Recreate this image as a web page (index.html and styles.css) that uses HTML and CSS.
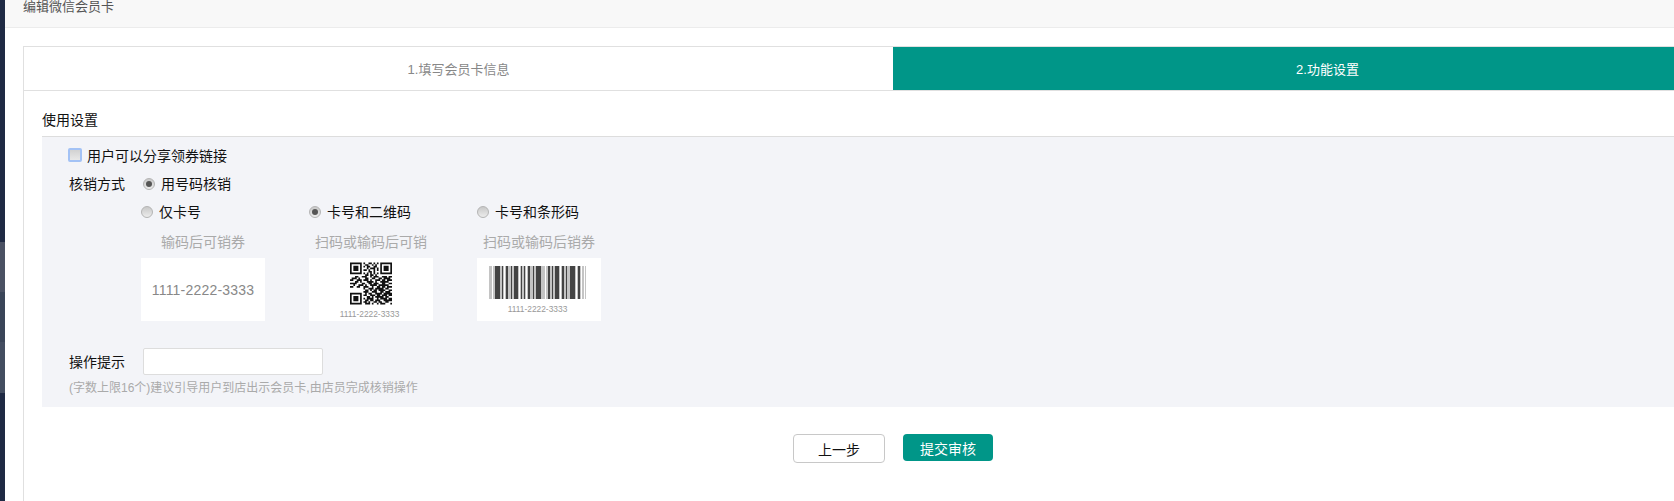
FILE: index.html
```html
<!DOCTYPE html>
<html lang="zh-CN">
<head>
<meta charset="utf-8">
<title>编辑微信会员卡</title>
<link rel="stylesheet" href="styles.css">
</head>
<body>
<div class="app">
  <aside class="rail">
    <div class="rail-dark rail-top"></div>
    <div class="rail-a"></div>
    <div class="rail-b"></div>
    <div class="rail-c"></div>
    <div class="rail-dark rail-fill"></div>
  </aside>
  <main class="main">
    <header class="page-head">编辑微信会员卡</header>
    <section class="card">
      <div class="tabs">
        <div class="tab">1.填写会员卡信息</div>
        <div class="tab tab-active">2.功能设置</div>
      </div>
      <h2 class="section-title">使用设置</h2>
      <div class="panel">
        <label class="row check-row"><input class="check" type="checkbox"><span>用户可以分享领券链接</span></label>
        <div class="row method-row">
          <span class="field-label">核销方式</span>
          <label class="radio-label"><input class="radio" type="radio" name="method" checked><span>用号码核销</span></label>
        </div>
        <div class="options">
          <div class="option">
            <label class="radio-label"><input class="radio" type="radio" name="code"><span>仅卡号</span></label>
            <p class="option-desc">输码后可销券</p>
            <div class="thumb thumb-plain">1111-2222-3333</div>
          </div>
          <div class="option">
            <label class="radio-label"><input class="radio" type="radio" name="code" checked><span>卡号和二维码</span></label>
            <p class="option-desc">扫码或输码后可销</p>
            <div class="thumb thumb-qr">
              <svg class="qr" viewBox="0 0 25 25" width="42" height="43" aria-hidden="true">
                <path fill="#111" fill-rule="evenodd" d="M0 0h7v7H0zM1 1v5h5V1zM2 2h3v3H2zM18 0h7v7h-7zM19 1v5h5V1zM20 2h3v3h-3zM0 18h7v7H0zM1 19v5h5v-5zM2 20h3v3H2z"/>
                <path stroke="#111" stroke-width="1" fill="none" d="M8 .5h1M11 .5h2M14 .5h1M16 .5h1M9 1.5h2M13 1.5h1M15 1.5h1M8 2.5h1M10 2.5h2M14 2.5h2M10 3.5h1M12 3.5h3M16 3.5h1M8 4.5h2M11 4.5h1M14 4.5h1M16 4.5h1M11 5.5h2M14 5.5h1M8 6.5h1M10 6.5h1M12 6.5h1M14 6.5h1M16 6.5h1M9 7.5h2M12 7.5h2M15 7.5h1M3 8.5h2M7 8.5h3M12 8.5h1M14 8.5h3M19 8.5h3M23 8.5h2M1 9.5h3M5 9.5h1M9 9.5h2M13 9.5h2M17 9.5h2M20 9.5h4M0 10.5h2M4 10.5h3M8 10.5h3M12 10.5h1M15 10.5h3M19 10.5h2M22 10.5h3M3 11.5h2M6 11.5h1M10 11.5h4M15 11.5h1M18 11.5h5M0 12.5h4M7 12.5h2M11 12.5h2M14 12.5h3M19 12.5h2M23 12.5h2M2 13.5h1M5 13.5h3M9 13.5h1M12 13.5h4M17 13.5h6M0 14.5h2M4 14.5h2M8 14.5h3M13 14.5h1M16 14.5h2M19 14.5h2M22 14.5h3M8 15.5h1M11 15.5h3M15 15.5h5M21 15.5h2M9 16.5h2M12 16.5h1M14 16.5h2M17 16.5h4M23 16.5h2M8 17.5h3M13 17.5h3M18 17.5h2M21 17.5h3M9 18.5h1M11 18.5h2M15 18.5h4M20 18.5h5M8 19.5h2M12 19.5h3M16 19.5h2M19 19.5h3M23 19.5h2M10 20.5h2M13 20.5h1M15 20.5h5M21 20.5h2M8 21.5h1M10 21.5h4M16 21.5h1M18 21.5h4M23 21.5h2M9 22.5h2M12 22.5h2M15 22.5h3M20 22.5h5M8 23.5h2M11 23.5h1M14 23.5h2M17 23.5h2M21 23.5h2M9 24.5h3M13 24.5h1M16 24.5h1M18 24.5h3M24 24.5h1"/>
              </svg>
              <span class="thumb-code thumb-code-qr">1111-2222-3333</span>
            </div>
          </div>
          <div class="option">
            <label class="radio-label"><input class="radio" type="radio" name="code"><span>卡号和条形码</span></label>
            <p class="option-desc">扫码或输码后销券</p>
            <div class="thumb thumb-bar">
              <svg class="bars" viewBox="0 0 97 33" width="97" height="33" aria-hidden="true">
                <path fill="#c4c4c4" d="M0 0h97v33H0z"/>
                <path fill="#fff" d="M3 0h1v33H3zM15 0h1v33h-1zM30 0h1v33h-1zM37 0h1v33h-1zM56 0h1v33h-1zM71 0h1v33h-1zM87 0h1v33h-1zM92 0h1v33h-1zM95 0h1v33h-1z"/>
                <path fill="#444" d="M6 0h5v33H6zM13 0h1v33h-1zM17 0h2v33h-2zM22 0h1v33h-1zM25 0h4v33h-4zM32 0h1v33h-1zM35 0h1v33h-1zM39 0h2v33h-2zM44 0h1v33h-1zM47 0h5v33h-5zM59 0h2v33h-2zM63 0h1v33h-1zM66 0h4v33h-4zM73 0h2v33h-2zM77 0h1v33h-1zM81 0h5v33h-5zM89 0h2v33h-2z"/>
              </svg>
              <span class="thumb-code thumb-code-bar">1111-2222-3333</span>
            </div>
          </div>
        </div>
        <div class="tip-row">
          <span class="field-label">操作提示</span>
          <input class="tip-input" type="text">
        </div>
        <p class="hint">(字数上限16个)建议引导用户到店出示会员卡,由店员完成核销操作</p>
      </div>
      <div class="actions">
        <button class="btn btn-back" type="button">上一步</button>
        <button class="btn btn-submit" type="button">提交审核</button>
      </div>
    </section>
  </main>
</div>
</body>
</html>
```

FILE: styles.css
```css
* {
  box-sizing: border-box;
}

html,
body {
  margin: 0;
  height: 100%;
  overflow: hidden;
  background: #fff;
}

body {
  font-family: "Liberation Sans", "Noto Sans CJK SC", sans-serif;
  font-size: 14px;
  color: #111;
}

.app {
  display: flex;
  height: 501px;
  overflow: hidden;
}

.rail {
  flex: 0 0 5px;
  display: flex;
  flex-direction: column;
  background: #1f2a44;
}

.rail-top {
  height: 242px;
}

.rail-a {
  height: 50px;
  background: #4a5163;
}

.rail-b {
  height: 50px;
  background: #3a4558;
}

.rail-c {
  height: 51px;
  background: #434d60;
}

.rail-fill {
  flex: 1;
}

.main {
  flex: 1;
  min-width: 0;
  overflow: hidden;
}

.page-head {
  height: 28px;
  padding-left: 18px;
  background: #f8f8f8;
  border-bottom: 1px solid #ececec;
  font-size: 13px;
  line-height: 14px;
  color: #555;
}

.card {
  width: 1740px;
  min-height: 480px;
  margin: 18px 0 0 18px;
  border: 1px solid #e0e0e0;
  background: #fff;
}

.tabs {
  display: grid;
  grid-template-columns: 1fr 1fr;
  border-bottom: 1px solid #e0e0e0;
}

.tab {
  height: 43px;
  font-size: 13px;
  line-height: 45px;
  text-align: center;
  color: #888;
}

.tab-active {
  background: #009688;
  color: #fff;
}

.section-title {
  height: 46px;
  margin: 0 0 0 18px;
  padding-top: 19px;
  border-bottom: 1px solid #ddd;
  font-size: 14px;
  font-weight: 400;
  line-height: 20px;
  color: #111;
}

.panel {
  margin-left: 18px;
  padding: 8px 0 10px 26px;
  background: #f3f4f8;
}

.row {
  display: flex;
  align-items: center;
  height: 20px;
}

.check-row {
  gap: 5px;
}

.check {
  width: 14px;
  height: 14px;
  margin: 0;
  appearance: none;
  border: 2px solid #a3c2f5;
  border-radius: 2px;
  background: linear-gradient(#d2d2d2, #e8e8e8);
}

.method-row {
  margin-top: 9px;
  padding-left: 1px;
}

.field-label {
  flex: 0 0 56px;
  margin-right: 18px;
  line-height: 20px;
}

.radio-label {
  display: flex;
  align-items: center;
  gap: 6px;
  height: 20px;
  line-height: 20px;
}

.radio {
  position: relative;
  flex: 0 0 12px;
  width: 12px;
  height: 12px;
  margin: 0;
  appearance: none;
  border: 1px solid #b4b4b4;
  border-radius: 50%;
  background: linear-gradient(#c8c8c8, #ececec);
}

.radio:checked::after {
  content: "";
  position: absolute;
  top: 2px;
  left: 2px;
  width: 6px;
  height: 6px;
  border-radius: 50%;
  background: #555;
}

.options {
  display: flex;
  gap: 44px;
  margin-top: 8px;
  padding-left: 73px;
}

.option {
  flex: 0 0 124px;
}

.option-desc {
  margin: 10px 0 6px;
  line-height: 20px;
  text-align: center;
  white-space: nowrap;
  color: #aaa;
}

.thumb {
  display: flex;
  flex-direction: column;
  align-items: center;
  height: 63px;
  background: #fff;
}

.thumb-plain {
  justify-content: center;
  font-size: 14px;
  letter-spacing: 0.2px;
  color: #888;
}

.thumb-qr {
  padding-top: 4px;
}

.thumb-bar {
  padding-top: 8px;
  padding-right: 3px;
}

.qr {
  display: block;
  flex: none;
  filter: blur(0.4px);
}

.bars {
  display: block;
  flex: none;
  filter: blur(0.6px);
}

.thumb-code {
  font-size: 8.4px;
  line-height: 10px;
  color: #999;
}

.thumb-code-qr {
  margin-top: 4px;
  margin-right: 3px;
}

.thumb-code-bar {
  margin-top: 5px;
}

.tip-row {
  display: flex;
  align-items: center;
  height: 27px;
  margin-top: 27px;
  padding-left: 1px;
}

.tip-input {
  width: 180px;
  height: 27px;
  padding: 0 6px;
  border: 1px solid #ddd;
  border-radius: 2px;
  background: #fff;
}

.hint {
  margin: 4px 0 0 1px;
  font-size: 12px;
  line-height: 18px;
  color: #aaa;
}

.actions {
  display: flex;
  justify-content: center;
  align-items: flex-start;
  gap: 18px;
  margin-top: 27px;
}

.btn {
  padding: 0;
  border-radius: 4px;
  font-family: inherit;
  font-size: 14px;
}

.btn-back {
  width: 92px;
  height: 29px;
  border: 1px solid #c8c8c8;
  background: #fff;
  color: #111;
}

.btn-submit {
  width: 90px;
  height: 27px;
  border: 0;
  background: #009688;
  color: #fff;
}
```
